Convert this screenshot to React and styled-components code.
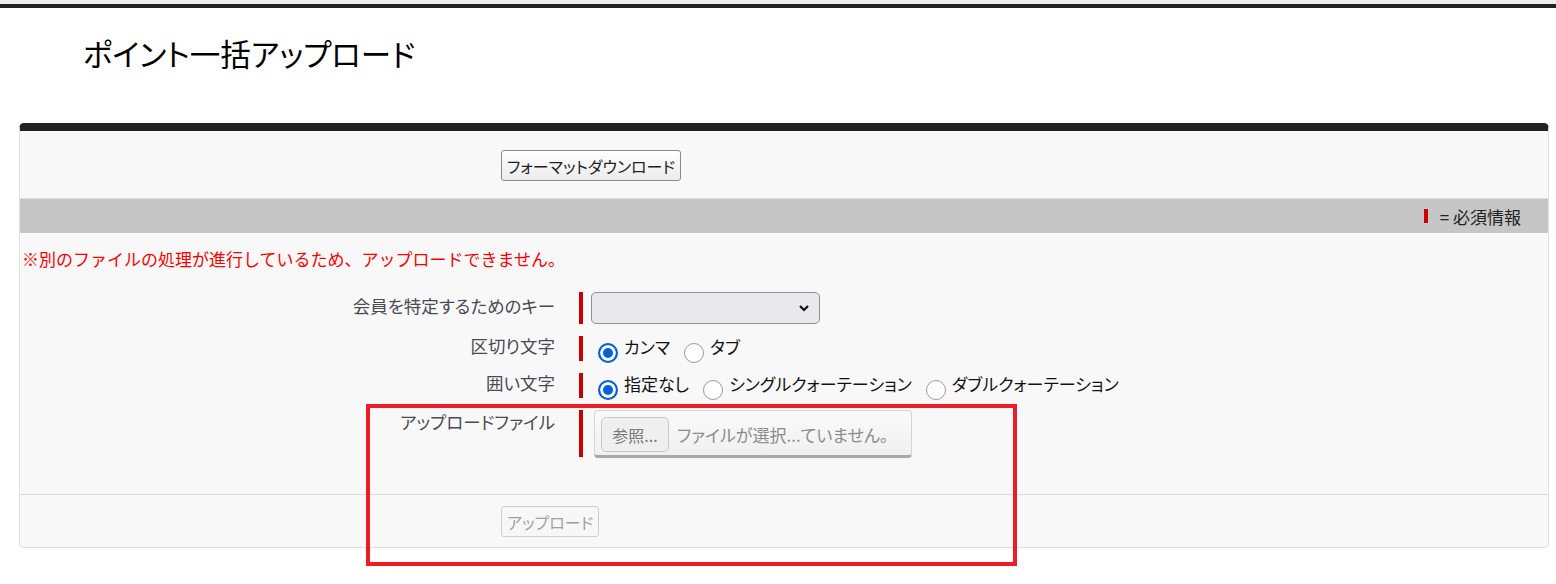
import React from 'react';
import styled, { createGlobalStyle } from 'styled-components';

const GlobalStyle = createGlobalStyle`
 body {
  margin: 0;
  background: #fff;
  font-family: "Noto Sans CJK JP", "Noto Sans", sans-serif;
  font-feature-settings: "palt";
 }
`;

const Page = styled.div`
 position: relative;
 width: 1556px;
 min-height: 584px;
 border-top: 4px solid #eeeeee;
`;

const TopBar = styled.div`
 height: 4px;
 background: #222;
`;

const Title = styled.h1`
 margin: 25px 0 50px 83px;
 font-size: 30.5px;
 line-height: 40px;
 font-weight: 400;
 color: #000;
`;

const Panel = styled.div`
 margin: 0 7px 0 19px;
 background: #f8f8f8;
 border: 1px solid #e0e0e0;
 border-top: 8px solid #222;
 border-radius: 5px;
`;

const ButtonBar = styled.div`
 padding: ${(p) => (p.$bottom ? '11px 0 10px 481px' : '19px 0 17px 481px')};
 border-bottom: ${(p) => (p.$bottom ? 'none' : '1px solid #dcdcdc')};
`;

const Button = styled.button`
 height: 31px;
 padding: 0 5px;
 font-family: inherit;
 font-feature-settings: "palt";
 font-size: 16px;
 color: ${(p) => (p.disabled ? '#a0a0a0' : '#222')};
 background: ${(p) =>
  p.disabled ? '#f7f7f7' : 'linear-gradient(#ffffff, #ececec)'};
 border: 1px solid ${(p) => (p.disabled ? '#cfcfcf' : '#8a8a8a')};
 border-radius: 3px;
`;

const SectionHeader = styled.div`
 height: 34px;
 background: #c6c6c6;
 display: flex;
 align-items: center;
 justify-content: flex-end;
 padding-right: 27px;
 font-size: 17px;
 font-feature-settings: normal;
 color: #222;
`;

const RequiredMark = styled.span`
 display: inline-block;
 width: 4px;
 height: ${(p) => p.$h || '14px'};
 background: #c00;
 margin-right: ${(p) => (p.$inline ? '12px' : '0')};
`;

const ErrorText = styled.div`
 padding: 14px 0 0 2px;
 line-height: 24px;
 font-size: 17px;
 font-feature-settings: normal;
 color: #ff0000;
`;

const Form = styled.div`
 display: flex;
 flex-direction: column;
 gap: 12px;
 margin-top: 21px;
 padding-bottom: 37px;
 border-bottom: 1px solid #dcdcdc;
`;

const Row = styled.div`
 display: flex;
 align-items: stretch;
 height: ${(p) => p.$h}px;
`;

const Label = styled.div`
 width: 535px;
 flex: none;
 text-align: right;
 font-size: 17.5px;
 line-height: 22px;
 color: #4a4a56;
 align-self: ${(p) => (p.$top ? 'flex-start' : 'center')};
 margin-top: ${(p) => (p.$top ? '1px' : '-5px')};
`;

const Bar = styled.div`
 width: 4px;
 margin-left: 24px;
 background: #c00;
 flex: none;
`;

const Field = styled.div`
 margin-left: ${(p) => p.$ml || 8}px;
 display: flex;
 align-items: flex-start;
`;

const SelectBox = styled.div`
 width: 229px;
 height: 32px;
 box-sizing: border-box;
 background: #e9e9ed;
 border: 1px solid #8f8f9d;
 border-radius: 5px;
 display: flex;
 align-items: center;
 justify-content: flex-end;
 padding-right: 9px;
`;

const RadioItem = styled.label`
 display: flex;
 align-items: flex-start;
 margin-right: ${(p) => p.$mr || 14}px;
 font-size: 17px;
 line-height: 22px;
 color: #111;
`;

const Radio = styled.span`
 width: 20px;
 height: 20px;
 box-sizing: border-box;
 border-radius: 50%;
 margin: 7px 6px 0 0;
 flex: none;
 background: ${(p) => (p.$checked ? '#0060df' : '#fff')};
 border: ${(p) => (p.$checked ? '2px solid #0060df' : '1px solid #9a9aa6')};
 box-shadow: ${(p) => (p.$checked ? 'inset 0 0 0 3px #fff' : 'none')};
`;

const FileBox = styled.div`
 width: 318px;
 height: 48px;
 box-sizing: border-box;
 display: flex;
 align-items: flex-start;
 padding: 6px 0 0 6px;
 background: linear-gradient(#fafafa, #f0f0f0);
 border: 1px solid #d4d4d4;
 border-bottom: 3px solid #a8a8a8;
 border-radius: 4px;
`;

const BrowseButton = styled.span`
 width: 68px;
 height: 35px;
 box-sizing: border-box;
 display: flex;
 align-items: center;
 justify-content: center;
 background: #efefef;
 border: 1px solid #c8c8c8;
 border-radius: 5px;
 font-size: 16px;
 color: #777;
`;

const FileText = styled.span`
 margin: 6px 0 0 8px;
 line-height: 24px;
 font-size: 17px;
 color: #8c8c8c;
`;

const Highlight = styled.div`
 position: absolute;
 left: 366px;
 top: 400px;
 width: 651px;
 height: 162px;
 box-sizing: border-box;
 border: 4px solid #ee1c25;
 pointer-events: none;
`;

const Chevron = () => (
 <svg width="12" height="8" viewBox="0 0 12 8">
  <path d="M2 2l4 4 4-4" fill="none" stroke="#111" strokeWidth="2.2" />
 </svg>
);

function App() {
 return (
  <>
   <GlobalStyle />
   <Page>
    <TopBar />
    <Title>ポイント一括アップロード</Title>
    <Panel>
     <ButtonBar>
      <Button>フォーマットダウンロード</Button>
     </ButtonBar>
     <SectionHeader>
      <RequiredMark $inline />= 必須情報
     </SectionHeader>
     <ErrorText>
      ※別のファイルの処理が進行しているため、アップロードできません。
     </ErrorText>
     <Form>
      <Row $h={32}>
       <Label>会員を特定するためのキー</Label>
       <Bar />
       <Field>
        <SelectBox>
         <Chevron />
        </SelectBox>
       </Field>
      </Row>
      <Row $h={25}>
       <Label>区切り文字</Label>
       <Bar />
       <Field $ml={15}>
        <RadioItem>
         <Radio $checked />
         カンマ
        </RadioItem>
        <RadioItem>
         <Radio />
         タブ
        </RadioItem>
       </Field>
      </Row>
      <Row $h={25}>
       <Label>囲い文字</Label>
       <Bar />
       <Field $ml={15}>
        <RadioItem>
         <Radio $checked />
         指定なし
        </RadioItem>
        <RadioItem>
         <Radio />
         シングルクォーテーション
        </RadioItem>
        <RadioItem>
         <Radio />
         ダブルクォーテーション
        </RadioItem>
       </Field>
      </Row>
      <Row $h={47}>
       <Label $top>アップロードファイル</Label>
       <Bar />
       <Field $ml={11}>
        <FileBox>
         <BrowseButton>参照...</BrowseButton>
         <FileText>ファイルが選択...ていません。</FileText>
        </FileBox>
       </Field>
      </Row>
     </Form>
     <ButtonBar $bottom>
      <Button disabled>アップロード</Button>
     </ButtonBar>
    </Panel>
    <Highlight />
   </Page>
  </>
 );
}

export default App;
